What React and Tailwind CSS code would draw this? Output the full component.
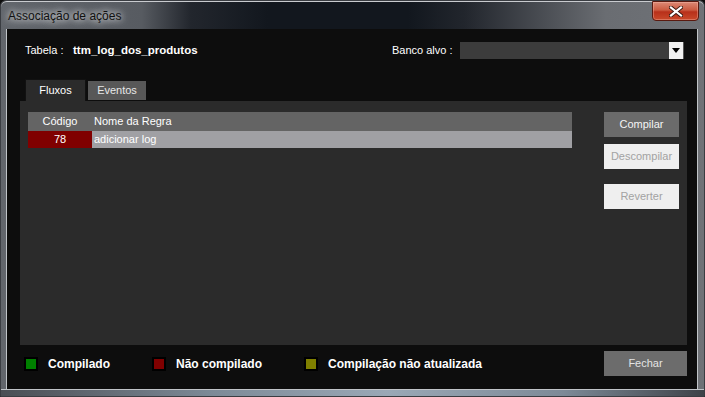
import React from 'react';

const legend = [
  { label: 'Compilado', color: 'bg-[#008000]', width: 'w-[128px]' },
  { label: 'Não compilado', color: 'bg-[#800000]', width: 'w-[152px]' },
  { label: 'Compilação não atualizada', color: 'bg-[#808000]', width: 'w-[200px]' },
];

const CloseGlyph = () => (
  <svg width="14" height="11" viewBox="0 0 14 11">
    <path d="M2 1.5 L12 9.5 M12 1.5 L2 9.5" stroke="#3a1a12" strokeWidth="4" strokeLinecap="square" />
    <path d="M2 1.5 L12 9.5 M12 1.5 L2 9.5" stroke="#ffffff" strokeWidth="2.2" strokeLinecap="square" />
  </svg>
);

export default function App() {
  return (
    <div className="w-[705px] h-[397px] bg-[#0d0d0d] font-['Liberation_Sans',Arial,sans-serif] text-[11px] overflow-hidden">
      {/* Aero window frame */}
      <div className="w-[705px] h-[397px] flex flex-col rounded-t-[6px] border border-[#3a3d42] bg-[linear-gradient(90deg,#62666c_0%,#575b61_20%,#22262d_27%,#12171e_38%,#12171e_58%,#22262d_66%,#6a6d72_86%,#6f7277_100%)] overflow-hidden">
        {/* Title bar */}
        <div className="h-[28px] flex items-start border-t border-[#c9cbcf] rounded-t-[6px] relative">
          <div className="ml-[7px] mt-[5px] text-[12px] text-[#111] [text-shadow:0_0_6px_#e8eaec,0_0_10px_#d0d3d6]">
            Associação de ações
          </div>
          <div className="absolute right-[5px] -top-px w-[47px] h-[20px] rounded-b-[4px] border border-[#5a1a10] bg-[linear-gradient(180deg,#dc8a76_0%,#cb5a40_45%,#b8301a_55%,#c9492a_100%)] flex items-center justify-center shadow-[inset_0_0_0_1px_rgba(255,200,190,0.35)]">
            <CloseGlyph />
          </div>
        </div>

        <div className="flex flex-1">
          {/* left frame */}
          <div className="w-[6px] border-r border-[#c0c4c8]" />

          {/* client area */}
          <div className="w-[690px] h-[360px] bg-[#0d0d0d] flex flex-col text-white">
            {/* Tabela / Banco alvo */}
            <div className="mt-[13px] h-[17px] flex items-center">
              <span className="ml-[18px] w-[48px]">Tabela :</span>
              <span className="font-bold text-[11.5px] w-[319px]">ttm_log_dos_produtos</span>
              <span className="w-[68px]">Banco alvo :</span>
              <div className="w-[224px] h-[17px] bg-[#3c3c3c] flex justify-end">
                <div className="w-[15px] h-[17px] bg-[#f0f0f0] border-r border-[#555] flex items-center justify-center">
                  <svg width="8" height="5" viewBox="0 0 8 5">
                    <path d="M0 0 H8 L4 5 Z" fill="#000" />
                  </svg>
                </div>
              </div>
            </div>

            {/* Tabs */}
            <div className="mt-[20px] ml-[18px] flex items-end h-[22px]">
              <div className="w-[61px] h-[22px] bg-[#2b2b2b] border-t border-l border-r border-[#111] flex items-center justify-center pb-px">
                Fluxos
              </div>
              <div className="ml-[2px] mb-px w-[58px] h-[19px] bg-[#585858] flex items-center justify-center text-[#e8e8e8]">
                Eventos
              </div>
            </div>

            {/* Panel */}
            <div className="ml-[13px] w-[667px] h-[244px] bg-[#2b2b2b] flex pt-[11px] pl-[8px]">
              <div className="w-[544px] flex flex-col">
                <div className="h-[19px] bg-[#646464] flex items-center">
                  <span className="w-[64px] text-center">Código</span>
                  <span className="ml-[2px]">Nome da Regra</span>
                </div>
                <div className="h-[17px] flex items-center">
                  <span className="w-[64px] h-full bg-[#800000] flex items-center justify-center">78</span>
                  <span className="flex-1 h-full bg-[#a0a0a4] flex items-center pl-[2px]">adicionar log</span>
                </div>
              </div>
              <div className="ml-[32px] w-[75px] flex flex-col">
                <div className="h-[25px] bg-[#6b6b6b] flex items-center justify-center text-[#f4f4f4]">Compilar</div>
                <div className="mt-[7px] h-[25px] bg-[#efefef] flex items-center justify-center text-[#a2a2a2]">Descompilar</div>
                <div className="mt-[15px] h-[25px] bg-[#efefef] flex items-center justify-center text-[#a2a2a2]">Reverter</div>
              </div>
            </div>

            {/* Legend + Fechar */}
            <div className="mt-[6px] h-[25px] flex items-center">
              <div className="ml-[17px] flex items-center">
                {legend.map((item) => (
                  <div key={item.label} className={`flex items-center ${item.width}`}>
                    <div className="w-[14px] h-[14px] bg-black p-[2px]">
                      <div className={`w-full h-full ${item.color}`} />
                    </div>
                    <span className="ml-[10px] font-bold text-[12px]">{item.label}</span>
                  </div>
                ))}
              </div>
              <div className="ml-auto mr-[10px] w-[83px] h-[25px] bg-[#6c6c6c] flex items-center justify-center text-[#e4e4e4]">
                Fechar
              </div>
            </div>
          </div>

          {/* right frame */}
          <div className="w-[7px] border-l border-[#c0c4c8]" />
        </div>

        {/* bottom frame */}
        <div className="h-[7px] border-t border-[#c0c4c8] bg-[linear-gradient(90deg,#4a4e54_0%,#7d8a97_30%,#9aa8b6_55%,#7d8a97_80%,#3e4248_100%)]" />
      </div>
    </div>
  );
}
